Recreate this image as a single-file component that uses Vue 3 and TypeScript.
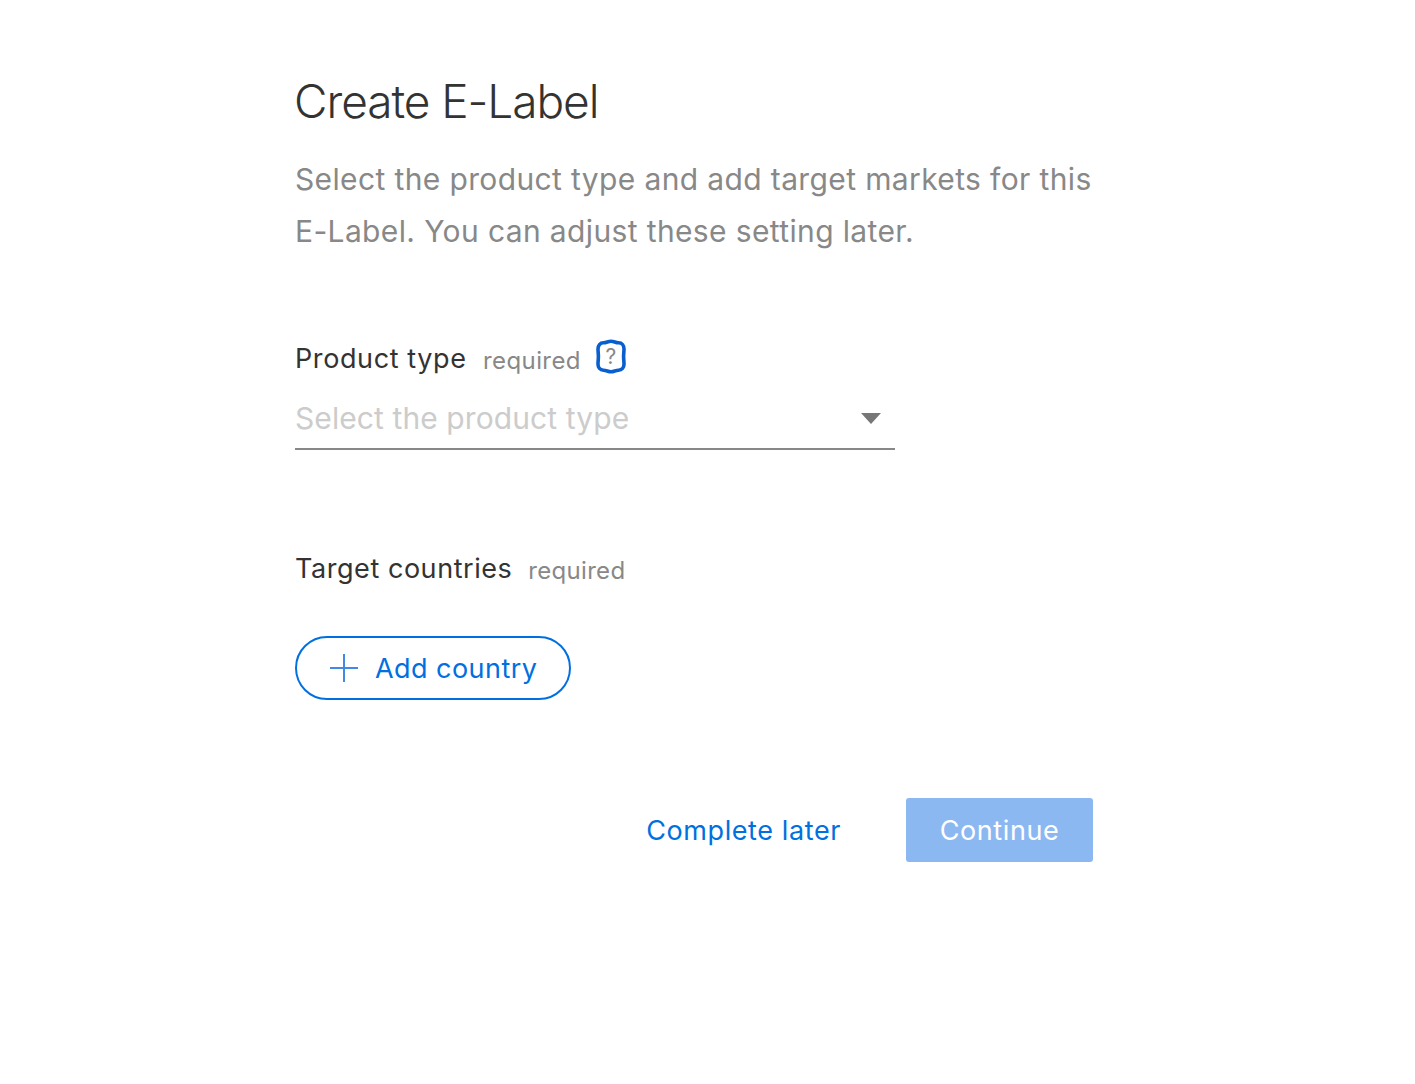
<script setup lang="ts">
const title = 'Create E-Label'
</script>

<template>
  <main class="page">
    <h1 class="title">{{ title }}</h1>
    <p class="intro">Select the product type and add target markets for this E-Label. You can adjust these setting later.</p>

    <section class="field product">
      <div class="label-row">
        <span class="label">Product type</span>
        <span class="req">required</span>
        <span class="help">
          <svg width="30" height="35" viewBox="0 0 30 35" fill="none" stroke="#0a5fd0" stroke-width="3.6">
            <path d="M15 2.2C18 2.2 19.5 3.8 22.5 3.8C26 3.8 28 6.5 28 10C28 12.5 27.6 15 27.6 17.5C27.6 20 28 22.5 28 25C28 28.5 26 31.2 22.5 31.2C19.5 31.2 18 32.8 15 32.8C12 32.8 10.5 31.2 7.5 31.2C4 31.2 2 28.5 2 25C2 22.5 2.4 20 2.4 17.5C2.4 15 2 12.5 2 10C2 6.5 4 3.8 7.5 3.8C10.5 3.8 12 2.2 15 2.2Z" />
          </svg>
          <span class="help-mark">?</span>
        </span>
      </div>
      <div class="select">
        <span class="placeholder">Select the product type</span>
        <span class="caret"></span>
      </div>
    </section>

    <section class="field countries">
      <div class="label-row">
        <span class="label">Target countries</span>
        <span class="req">required</span>
      </div>
      <button class="add" type="button">
        <svg width="30" height="30" viewBox="0 0 30 30" fill="none" stroke="#3f8ae6" stroke-width="2">
          <path d="M15 1V29M1 15H29" />
        </svg>
        <span>Add country</span>
      </button>
    </section>

    <div class="actions">
      <a class="later">Complete later</a>
      <button class="continue" type="button" disabled>Continue</button>
    </div>
  </main>
</template>

<style>
html, body { margin: 0; background: #fff; }
</style>

<style scoped>
.page {
  width: 798px;
  margin-left: 295px;
  padding-top: 71px;
  font-family: "Inter", "Liberation Sans", sans-serif;
  box-sizing: border-box;
  min-height: 1084px;
}
.title {
  margin: 0 0 0 -1px;
  font-size: 46px;
  line-height: 60px;
  font-weight: 300;
  color: #333;
  letter-spacing: -1.05px;
}
.intro {
  margin: 22px 0 0;
  font-size: 30px;
  line-height: 52px;
  letter-spacing: 0.37px;
  color: #888;
}
.field { display: flex; flex-direction: column; }
.product { margin-top: 85px; }
.countries { margin-top: 102px; }
.label-row { display: flex; align-items: baseline; height: 34px; }
.label { font-size: 27px; color: #333; letter-spacing: 0.6px; }
.req {
  font-size: 24px;
  color: #888;
  margin-left: 16.5px;
  letter-spacing: 0.4px;
  transform: translateY(1px);
}
.countries .label { letter-spacing: 0.55px; }
.countries .req { margin-left: 16px; letter-spacing: 0.3px; }
.help {
  position: relative;
  align-self: flex-start;
  width: 30px;
  height: 35px;
  margin: -3px 0 0 15px;
  display: flex;
  align-items: center;
  justify-content: center;
}
.help svg { position: absolute; inset: 0; }
.help-mark { position: relative; color: #888; font-size: 21px; line-height: 1; }
.select {
  width: 600px;
  height: 62px;
  margin-top: 12px;
  box-sizing: border-box;
  border-bottom: 2px solid #888;
  display: flex;
  align-items: center;
  justify-content: space-between;
  padding-right: 14px;
}
.placeholder { font-size: 30px; letter-spacing: 0.09px; color: #ccc; }
.caret {
  width: 0;
  height: 0;
  border-left: 10px solid transparent;
  border-right: 10px solid transparent;
  border-top: 11px solid #777;
}
.add {
  margin-top: 50px;
  align-self: flex-start;
  width: 276px;
  height: 64px;
  border: 2px solid #0070e0;
  border-radius: 32px;
  background: #fff;
  color: #0070e0;
  font: inherit;
  font-size: 27px;
  letter-spacing: 0.45px;
  display: flex;
  align-items: center;
  gap: 16px;
  padding: 0 0 0 32px;
  box-sizing: border-box;
}
.actions {
  display: flex;
  justify-content: flex-end;
  align-items: center;
  gap: 65px;
  margin-top: 98px;
}
.later { font-size: 27px; color: #0070e0; letter-spacing: 0.6px; }
.continue {
  width: 187px;
  height: 64px;
  border: 0;
  border-radius: 3px;
  background: #8cb8f2;
  color: #fff;
  font: inherit;
  font-size: 27px;
  letter-spacing: 0.6px;
}
</style>
